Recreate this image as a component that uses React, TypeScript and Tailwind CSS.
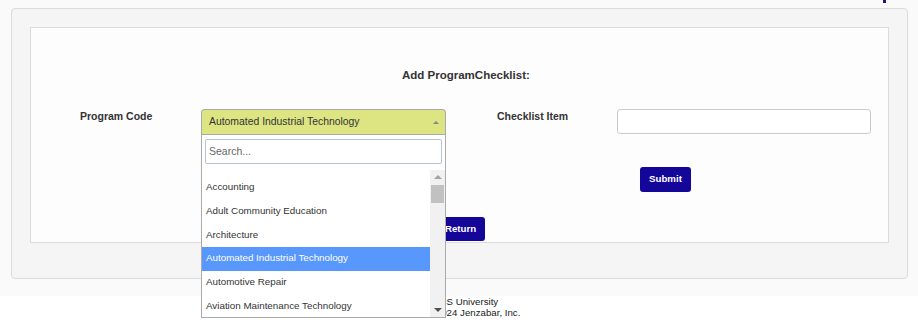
const programs = [
  'Accounting',
  'Adult Community Education',
  'Architecture',
  'Automated Industrial Technology',
  'Automotive Repair',
  'Aviation Maintenance Technology',
];

function ProgramSelect() {
  const selected = 'Automated Industrial Technology';
  return (
    <div className="relative w-[245px] shrink-0">
      <div className="flex h-[25px] items-center justify-between rounded-t-[4px] border border-[#aaaaaa] border-b-0 bg-[#dde583] pl-[7px] pr-[6px]">
        <span className="text-[10.4px] text-[#333]">{selected}</span>
        <span className="h-0 w-0 border-x-[3px] border-b-[3px] border-x-transparent border-b-[#888]" />
      </div>

      <div className="absolute left-0 top-full z-10 flex h-[184px] w-[245px] flex-col border border-[#aaaaaa] bg-white">
        <div className="p-[3px]">
          <input
            placeholder="Search..."
            className="h-[25px] w-full rounded-[2px] border border-[#b5c4da] px-[3px] text-[10.5px] text-[#333] outline-none placeholder:text-[#666]"
          />
        </div>
        <div className="flex min-h-0 flex-1 pt-[3px]">
          <ul className="flex-1 overflow-hidden pt-[6px]">
            {programs.map((p) => (
              <li
                key={p}
                className={`flex h-[23.8px] items-center pl-[4px] text-[9.8px] ${
                  p === selected ? 'bg-[#5897fb] text-white' : 'text-[#333]'
                }`}
              >
                {p}
              </li>
            ))}
          </ul>
          <div className="flex w-[15px] flex-col items-center bg-[#f1f1f1]">
            <div className="flex h-[15px] items-center justify-center">
              <span className="h-0 w-0 border-x-[4px] border-b-[4px] border-x-transparent border-b-[#a3a3a3]" />
            </div>
            <div className="h-[18px] w-[13px] bg-[#c1c1c1]" />
            <div className="flex-1" />
            <div className="flex h-[15px] items-center justify-center">
              <span className="h-0 w-0 border-x-[4px] border-t-[4px] border-x-transparent border-t-[#505050]" />
            </div>
          </div>
        </div>
      </div>
    </div>
  );
}

export default function App() {
  return (
    <div className="w-[918px] font-['Liberation_Sans',Arial,sans-serif]">
      <div className="h-[296px] bg-[#fafafa]">
        <div className="flex h-[8px] justify-end pr-[32px]">
          <div className="h-[3px] w-[3px] bg-[#1a1a6e]" />
        </div>

        <div className="ml-[11px] w-[897px] rounded-[4px] border border-[#dcdcdc] bg-[#f5f5f5] px-[18px] pb-[35px] pt-[18px]">
          <div className="h-[216px] border border-[#dcdcdc] bg-[#fdfdfd]">
            <div className="pl-[371px] pt-[40px] text-[11.5px] font-bold leading-[14px] text-[#333]">
              Add ProgramChecklist:
            </div>

            <div className="mt-[27px] flex items-start pl-[49px]">
              <label className="w-[121px] shrink-0 text-[10.5px] font-bold leading-[14px] text-[#333]">
                Program Code
              </label>
              <ProgramSelect />
              <label className="ml-[51px] w-[120px] shrink-0 text-[10.5px] font-bold leading-[14px] text-[#333]">
                Checklist Item
              </label>
              <input
                type="text"
                className="h-[25px] w-[254px] rounded-[3px] border border-[#cccccc] bg-white outline-none"
              />
            </div>

            <div className="mt-[33px] flex pl-[609px]">
              <button className="h-[25px] w-[51px] rounded-[3px] bg-[#15069a] text-[9.7px] font-bold text-white">
                Submit
              </button>
            </div>

            <div className="mt-[25px] flex justify-center">
              <button className="ml-[2px] h-[24px] w-[49px] rounded-[3px] bg-[#15069a] text-[9.7px] font-bold text-white">
                Return
              </button>
            </div>
          </div>
        </div>
      </div>

      <footer className="h-[24px] bg-white pl-[426px] text-[9.7px] leading-[11px] text-[#222]">
        <div className="pl-[6px]">JICS University</div>
        <div>© 2024 Jenzabar, Inc.</div>
      </footer>
    </div>
  );
}
